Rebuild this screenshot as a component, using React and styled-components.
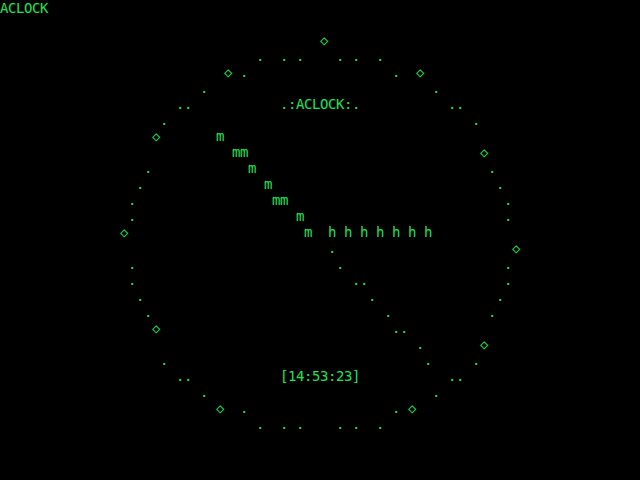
import React from 'react'
import styled, { createGlobalStyle } from 'styled-components'

const COLS = 80
const ROWS = 30

const GlobalStyle = createGlobalStyle`
  html, body {
    margin: 0;
    padding: 0;
    background: #000;
  }
`

const Screen = styled.div`
  width: 640px;
  height: 480px;
  background: #000;
  overflow: hidden;
`

const Terminal = styled.pre`
  margin: 0;
  font-family: "DejaVu Sans Mono", "Liberation Mono", monospace;
  font-size: 14px;
  letter-spacing: -0.4287px;
  line-height: 16px;
  color: #1fe35c;
`

const Line = styled.div`
  height: 16px;
  white-space: pre;
`

// what the terminal shows: [row, col, text]
const cells = [
  [0, 0, 'ACLOCK'],
  [2, 40, '◇'],
  [3, 32, '.'], [3, 35, '.'], [3, 37, '.'], [3, 42, '.'], [3, 44, '.'], [3, 47, '.'],
  [4, 28, '◇'], [4, 30, '.'], [4, 49, '.'], [4, 52, '◇'],
  [5, 25, '.'], [5, 54, '.'],
  [6, 22, '..'], [6, 35, '.:ACLOCK:.'], [6, 56, '..'],
  [7, 20, '.'], [7, 59, '.'],
  [8, 19, '◇'], [8, 27, 'm'],
  [9, 29, 'mm'], [9, 60, '◇'],
  [10, 18, '.'], [10, 31, 'm'], [10, 61, '.'],
  [11, 17, '.'], [11, 33, 'm'], [11, 62, '.'],
  [12, 16, '.'], [12, 34, 'mm'], [12, 63, '.'],
  [13, 16, '.'], [13, 37, 'm'], [13, 63, '.'],
  [14, 15, '◇'], [14, 38, 'm'], [14, 41, 'h h h h h h h'],
  [15, 41, '.'], [15, 64, '◇'],
  [16, 16, '.'], [16, 42, '.'], [16, 63, '.'],
  [17, 16, '.'], [17, 44, '..'], [17, 63, '.'],
  [18, 17, '.'], [18, 46, '.'], [18, 62, '.'],
  [19, 18, '.'], [19, 48, '.'], [19, 61, '.'],
  [20, 19, '◇'], [20, 49, '..'],
  [21, 52, '.'], [21, 60, '◇'],
  [22, 20, '.'], [22, 53, '.'], [22, 59, '.'],
  [23, 22, '..'], [23, 35, '[14:53:23]'], [23, 56, '..'],
  [24, 25, '.'], [24, 54, '.'],
  [25, 27, '◇'], [25, 30, '.'], [25, 49, '.'], [25, 51, '◇'],
  [26, 32, '.'], [26, 35, '.'], [26, 37, '.'], [26, 42, '.'], [26, 44, '.'], [26, 47, '.'],
]

function buildLines() {
  const grid = Array.from({ length: ROWS }, () => Array(COLS).fill(' '))
  cells.forEach(([r, c, text]) => {
    ;[...text].forEach((ch, i) => {
      grid[r][c + i] = ch
    })
  })
  return grid.map((row) => row.join('').replace(/\s+$/, ''))
}

export default function App() {
  const lines = buildLines()
  return (
    <>
      <GlobalStyle />
      <Screen>
        <Terminal>
          {lines.map((line, i) => (
            <Line key={i}>{line}</Line>
          ))}
        </Terminal>
      </Screen>
    </>
  )
}
